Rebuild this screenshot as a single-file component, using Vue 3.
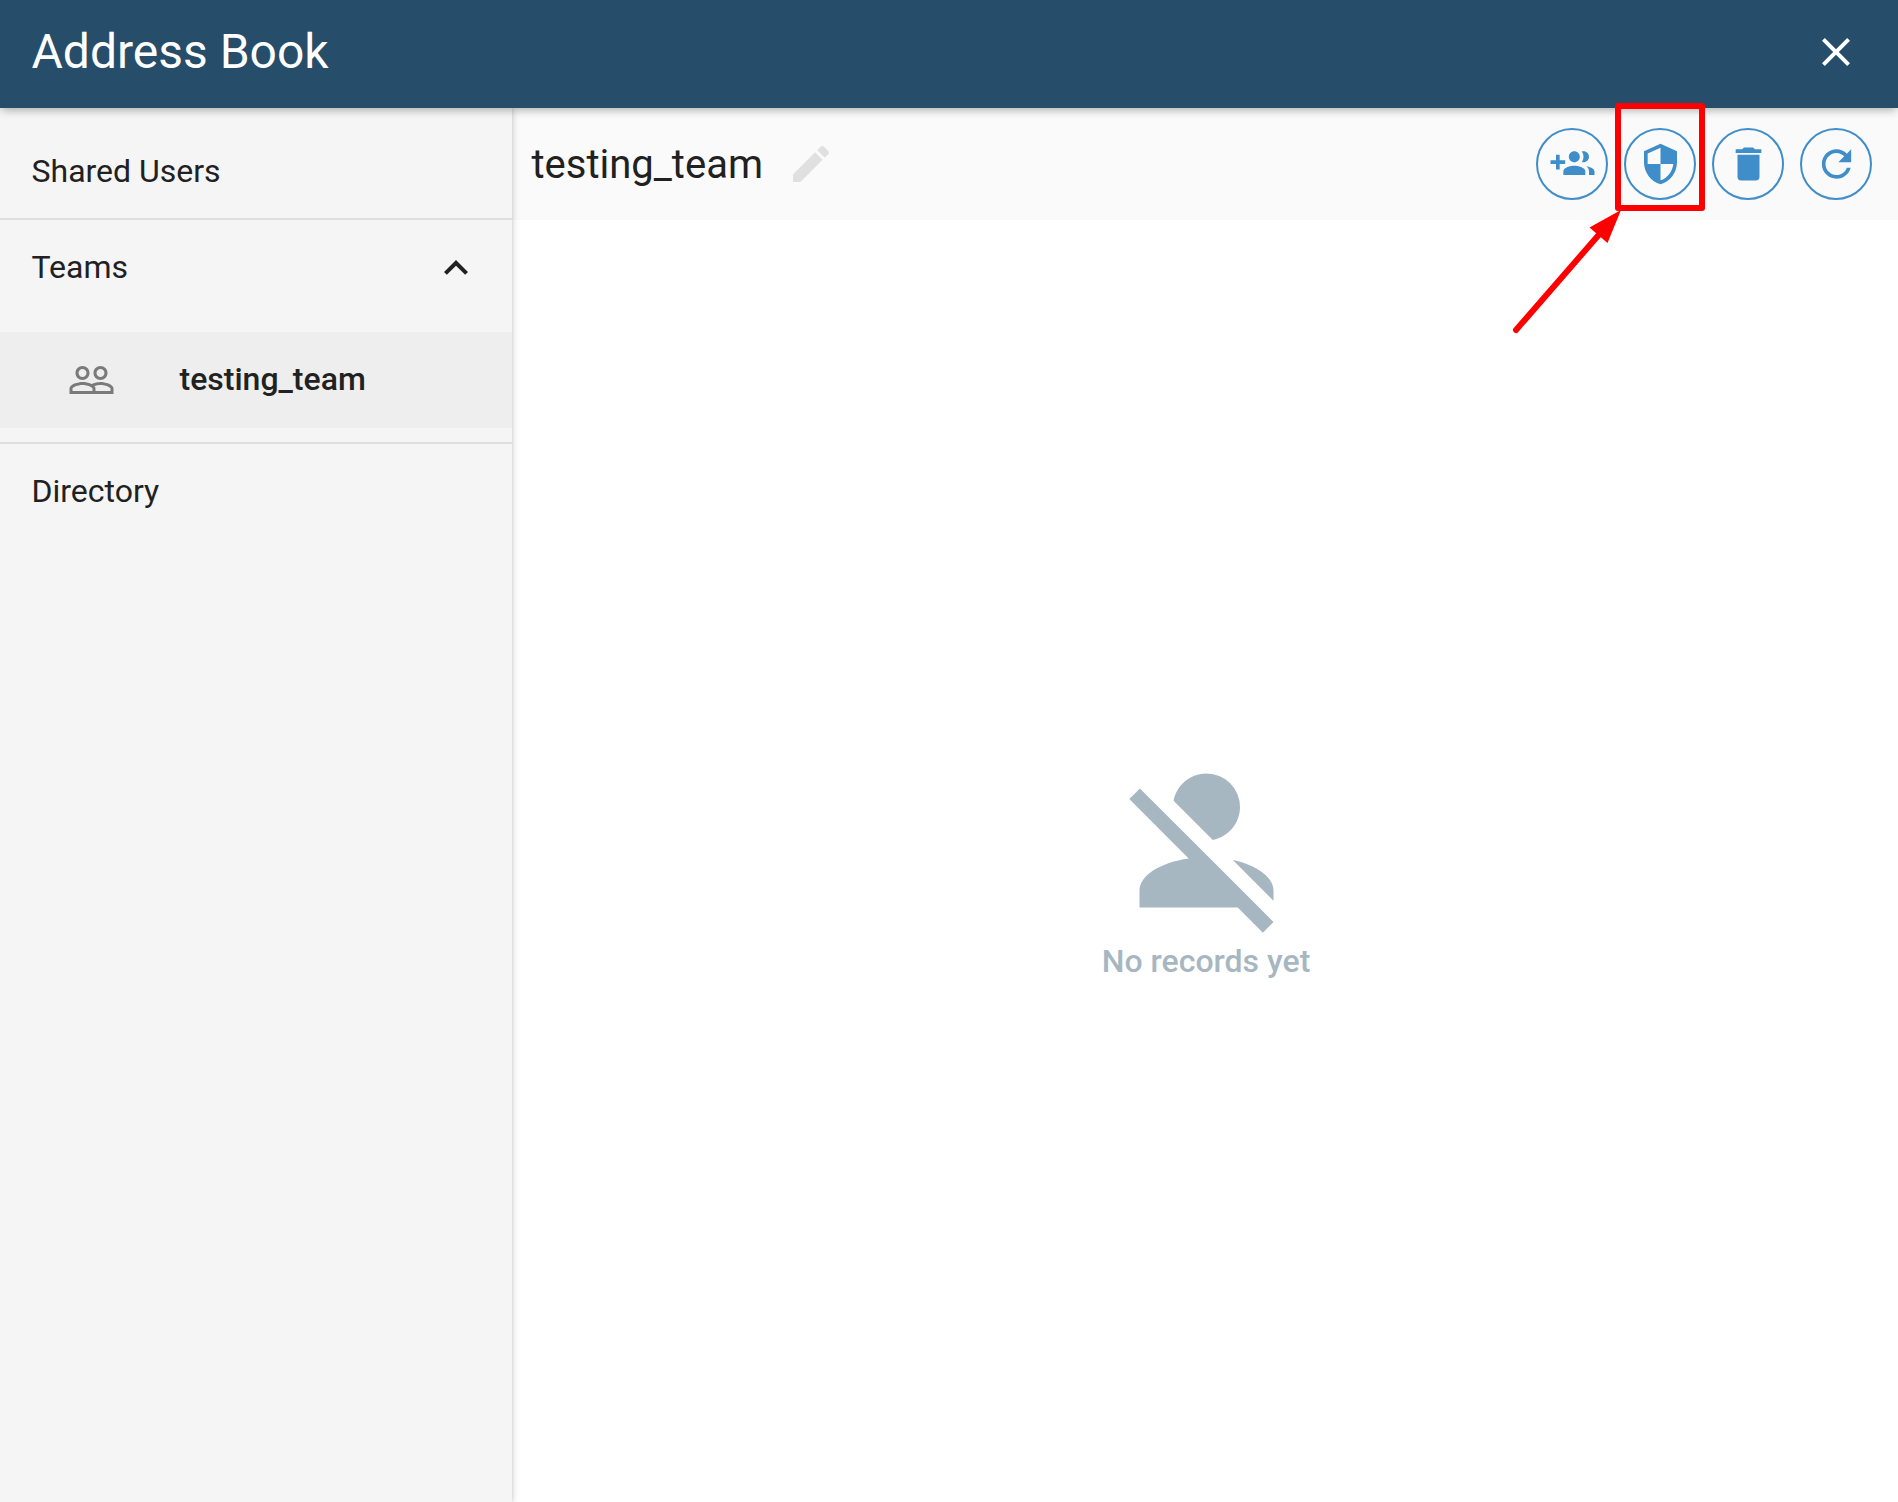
<script setup>
const icons = {
  groupAdd: 'M8 10H5V7H3v3H0v2h3v3h2v-3h3v-2zm10 1c1.66 0 2.99-1.34 2.99-3S19.66 5 18 5c-.32 0-.63.05-.91.14.57.81.9 1.79.9 2.86s-.34 2.04-.9 2.86c.28.09.59.14.91.14zm-5 0c1.66 0 2.99-1.34 2.99-3S14.66 5 13 5c-1.66 0-3 1.34-3 3s1.34 3 3 3zm6.62 2.16c.83.73 1.38 1.66 1.38 2.84v2h3v-2c0-1.54-2.37-2.49-4.38-2.84zM13 13c-2 0-6 1-6 3v2h12v-2c0-2-4-3-6-3z',
  security: 'M12 1L3 5v6c0 5.55 3.84 10.74 9 12 5.16-1.26 9-6.45 9-12V5l-9-4zm0 10.99h7c-.53 4.12-3.28 7.79-7 8.94V12H5V6.3l7-3.11v8.8z',
  trash: 'M19,4H15.5L14.5,3H9.5L8.5,4H5V6H19M6,19A2,2 0 0,0 8,21H16A2,2 0 0,0 18,19V7H6V19Z',
  refresh: 'M17.65 6.35C16.2 4.9 14.21 4 12 4c-4.42 0-7.99 3.58-7.99 8s3.57 8 7.99 8c3.73 0 6.84-2.55 7.73-6h-2.08c-.82 2.33-3.04 4-5.65 4-3.31 0-6-2.69-6-6s2.69-6 6-6c1.66 0 3.14.69 4.22 1.78L13 11h7V4l-2.35 2.35z',
  close: 'M19 6.41L17.59 5 12 10.59 6.41 5 5 6.41 10.59 12 5 17.59 6.41 19 12 13.41 17.59 19 19 17.59 13.41 12z',
  chevronUp: 'M7.41,15.41L12,10.83L16.59,15.41L18,14L12,8L6,14Z',
  people: 'M16.5 13c-1.2 0-3.07.34-4.5 1-1.43-.67-3.3-1-4.5-1C5.33 13 1 14.08 1 16.25V19h22v-2.75c0-2.17-4.33-3.25-6.5-3.25zm-4 4.5h-10v-1.25c0-.54 2.56-1.75 5-1.75s5 1.21 5 1.75v1.25zm9 0H14v-1.25c0-.46-.2-.86-.52-1.22.88-.3 1.96-.53 3.02-.53 2.44 0 5 1.21 5 1.75v1.25zM7.5 12c1.93 0 3.5-1.57 3.5-3.5S9.43 5 7.5 5 4 6.57 4 8.5 5.57 12 7.5 12zm0-5.5c1.1 0 2 .9 2 2s-.9 2-2 2-2-.9-2-2 .9-2 2-2zm9 5.5c1.93 0 3.5-1.57 3.5-3.5S18.43 5 16.5 5 13 6.57 13 8.5s1.57 3.5 3.5 3.5zm0-5.5c1.1 0 2 .9 2 2s-.9 2-2 2-2-.9-2-2 .9-2 2-2z',
  pencil: 'M20.71,7.04C21.1,6.65 21.1,6 20.71,5.63L18.37,3.29C18,2.9 17.35,2.9 16.96,3.29L15.12,5.12L18.87,8.87M3,17.25V21H6.75L17.81,9.93L14.06,6.18L3,17.25Z',
  accountOff: 'M12,4A4,4 0 0,1 16,8C16,9.95 14.6,11.58 12.75,11.93L8.07,7.25C8.42,5.4 10.05,4 12,4M12.28,14L18.28,20L20,21.72L18.73,23L15.73,20H4V18C4,16.16 6.5,14.61 9.87,14.14L2.78,7.05L4.05,5.78L12.28,14M20,18V19.18L15.14,14.32C18,14.93 20,16.35 20,18Z',
}

const actions = [
  { label: 'Add users', icon: icons.groupAdd },
  { label: 'Permissions', icon: icons.security },
  { label: 'Delete team', icon: icons.trash },
  { label: 'Refresh', icon: icons.refresh },
]
</script>

<template>
  <div class="dialog">
    <header class="header">
      <h1 class="header-title">Address Book</h1>
      <button class="plain-button" aria-label="Close">
        <svg class="icon" viewBox="0 0 24 24"><path :d="icons.close" /></svg>
      </button>
    </header>

    <div class="body">
      <nav class="sidebar">
        <div class="row shared">Shared Users</div>
        <hr class="divider" />
        <div class="row">
          <span class="label">Teams</span>
          <svg class="icon" viewBox="0 0 24 24"><path :d="icons.chevronUp" /></svg>
        </div>
        <div class="row team">
          <svg class="icon team-icon" viewBox="0 0 24 24"><path :d="icons.people" /></svg>
          <span class="label">testing_team</span>
        </div>
        <hr class="divider" />
        <div class="row"><span class="label">Directory</span></div>
      </nav>

      <main class="content">
        <div class="toolbar">
          <h2 class="team-title">testing_team</h2>
          <svg class="icon pencil" viewBox="0 0 24 24"><path :d="icons.pencil" /></svg>
          <div class="actions">
            <button v-for="a in actions" :key="a.label" class="action" :aria-label="a.label">
              <svg class="action-icon" viewBox="0 0 24 24"><path :d="a.icon" /></svg>
            </button>
          </div>
        </div>
        <section class="empty">
          <svg class="empty-icon" viewBox="0 0 24 24"><path :d="icons.accountOff" /></svg>
          <p class="empty-text">No records yet</p>
        </section>
      </main>
    </div>

    <svg class="callout" viewBox="0 0 200 240">
      <rect x="118" y="16" width="84" height="102" stroke-linejoin="round" />
      <line x1="16" y1="240" x2="103" y2="140" stroke-linecap="round" />
      <path d="M121 120L89.500 137.500L107.500 153Z" />
    </svg>
  </div>
</template>

<style>
body {
  margin: 0;
  background: #fff;
}
</style>

<style scoped>
.dialog {
  position: relative;
  display: flex;
  flex-direction: column;
  height: 1502px;
  overflow: hidden;
  font-family: Roboto, "Liberation Sans", sans-serif;
  color: #212121;
}

.icon {
  width: 48px;
  height: 48px;
  flex: none;
  fill: currentColor;
}

.plain-button {
  display: flex;
  padding: 0;
  border: 0;
  background: none;
  color: inherit;
}

.header {
  position: relative;
  z-index: 2;
  display: flex;
  flex: none;
  align-items: center;
  justify-content: space-between;
  box-sizing: border-box;
  height: 108px;
  padding: 0 38px 4px 31.5px;
  background: #264d69;
  color: #fff;
  box-shadow: 0 4px 8px -2px rgba(0, 0, 0, 0.2), 0 2px 10px rgba(0, 0, 0, 0.13);
}

.header-title {
  margin: 0;
  font-size: 48px;
  font-weight: 400;
  line-height: 60px;
}

.body {
  display: flex;
  flex: 1;
}

.sidebar {
  position: relative;
  z-index: 1;
  box-sizing: border-box;
  width: 512px;
  flex: none;
  padding-top: 14px;
  background: #f5f5f5;
  box-shadow: 1px 0 2px rgba(0, 0, 0, 0.06), 2px 0 6px rgba(0, 0, 0, 0.12);
}

.row {
  display: flex;
  align-items: center;
  justify-content: space-between;
  box-sizing: border-box;
  height: 96px;
  padding: 0 32px 0 31.5px;
  font-size: 32px;
  line-height: 40px;
}

.shared {
  padding-top: 2px;
}

.label {
  margin-bottom: 2px;
}

.divider {
  height: 2px;
  margin: 0;
  border: 0;
  background: #dfdfdf;
}

.team {
  justify-content: flex-start;
  gap: 63.5px;
  margin: 16px 0 14px;
  padding-left: 67px;
  background: #eee;
  font-weight: 500;
}

.team-icon {
  width: 49px;
  color: #7a7a7a;
}

.content {
  display: flex;
  flex: 1;
  flex-direction: column;
}

.toolbar {
  display: flex;
  align-items: center;
  height: 112px;
  padding: 0 26px 0 19.5px;
  background: #fafafa;
}

.team-title {
  margin: 2px 0 0;
  font-size: 40px;
  font-weight: 400;
  line-height: 48px;
}

.pencil {
  margin-left: 24px;
  color: #e0e0e0;
}

.actions {
  display: flex;
  gap: 16px;
  margin-left: auto;
}

.action {
  display: flex;
  align-items: center;
  justify-content: center;
  box-sizing: border-box;
  width: 72px;
  height: 72px;
  padding: 0 0 0 1px;
  border: 2px solid #3f8dc9;
  border-radius: 50%;
  background: transparent;
  color: #3f8dc9;
}

.action-icon {
  width: 45px;
  height: 44px;
  flex: none;
  fill: currentColor;
}

.empty {
  display: flex;
  flex: 1;
  flex-direction: column;
  align-items: center;
  padding: 520px 0 0 2px;
  color: #a7b7c2;
}

.empty-icon {
  width: 201px;
  height: 201px;
  fill: currentColor;
}

.empty-text {
  margin: 0;
  font-size: 32px;
  font-weight: 500;
  line-height: 40px;
}

.callout {
  position: absolute;
  z-index: 3;
  top: 90px;
  left: 1500px;
  width: 200px;
  height: 240px;
  overflow: visible;
  pointer-events: none;
  fill: #f00;
}

.callout rect {
  fill: none;
  stroke: #f00;
  stroke-width: 6;
}

.callout line {
  stroke: #f00;
  stroke-width: 6;
}
</style>
